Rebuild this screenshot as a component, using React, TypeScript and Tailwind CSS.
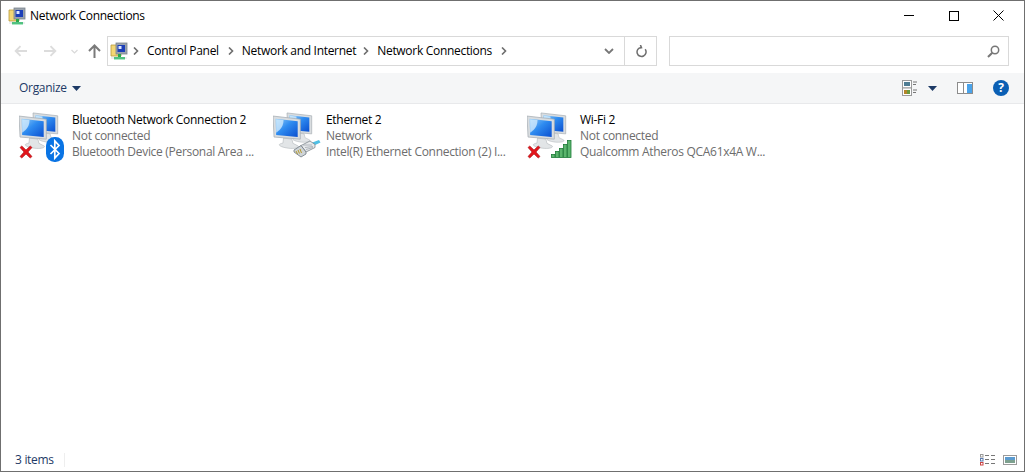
import React from "react";

// --- Data ---

type Connection = {
  name: string;
  status: string;
  device: string;
  badge: "bluetooth" | "ethernet" | "wifi";
};

const CONNECTIONS: Connection[] = [
  { name: "Bluetooth Network Connection 2", status: "Not connected", device: "Bluetooth Device (Personal Area ...", badge: "bluetooth" },
  { name: "Ethernet 2", status: "Network", device: "Intel(R) Ethernet Connection (2) I...", badge: "ethernet" },
  { name: "Wi-Fi 2", status: "Not connected", device: "Qualcomm Atheros QCA61x4A W...", badge: "wifi" },
];

// --- Icons ---

const FolderNetIcon = () => (
  <svg width="18" height="18" viewBox="0 0 18 18" className="shrink-0">
    <path d="M1 3h5l1 1h4v10H1z" fill="#f3d774" stroke="#b89a3e" strokeWidth="0.8" />
    <rect x="6" y="1" width="11" height="11" fill="#9aa3ad" stroke="#7b838c" strokeWidth="0.8" />
    <rect x="7.5" y="3" width="7.5" height="7" fill="#1c3fb8" />
    <rect x="8.5" y="4" width="3" height="3" fill="#dbe6fb" />
    <rect x="8" y="12" width="3" height="3" fill="#2aa84a" />
    <rect x="4" y="15" width="11" height="2.4" fill="#2fc26a" />
    <rect x="1" y="15.5" width="16" height="1" fill="#b9bfc4" opacity="0.5" />
  </svg>
);

const Monitor = ({ x, y, s = 1 }: { x: number; y: number; s?: number }) => (
  <g transform={`translate(${x} ${y}) scale(${s})`}>
    <path d="M10 22l8 1 1 4 5 2.500c1 1.500-2 2.500-7 2.300-5-.2-11-1.800-11-3.500 0-.7 2-1.300 3.500-1.500z" fill="#e2e5e7" stroke="#b5babe" strokeWidth="0.6" />
    <path d="M0 1l26 3v19L1 21z" fill="#d9dde0" stroke="#a5acb2" strokeWidth="0.7" />
    <path d="M2.500 3.500l21 2.400v15L3 19z" fill="url(#screenFill)" />
    <path d="M3 4l7 .8c0 5-2 9-7 12z" fill="#d8effd" opacity="0.75" />
  </g>
);

const RedCross = () => (
  <svg width="16" height="16" viewBox="0 0 16 16" className="absolute left-[0px] top-[33px]">
    <path d="M2 3.500L3.800 2l4.200 4 4.200-4L14 3.500 10 8l4 4.500-1.800 1.500L8 10l-4.200 4L2 12.500 6 8z" fill="#e2161c" stroke="#a81419" strokeWidth="0.6" />
  </svg>
);

const BluetoothBadge = () => (
  <svg width="18" height="25" viewBox="0 0 18 25" className="absolute left-[28px] top-[26px]">
    <rect x="0" y="0" width="18" height="25" rx="8.500" fill="#0a74e4" />
    <path d="M4.500 8l8.500 8.500-4.200 4.500V4l4.200 4.500L4.500 17" fill="none" stroke="#fff" strokeWidth="1.700" />
  </svg>
);

const EthernetBadge = () => (
  <svg width="28" height="18" viewBox="0 0 28 18" className="absolute left-[21px] top-[29px]">
    <path d="M18 3l8-3 1.500 2.500-7.500 3.500z" fill="#4fbfe4" />
    <path d="M8 5.500L17 1l5 3.500v3L13 12z" fill="#e6e9eb" stroke="#7c858d" strokeWidth="0.8" />
    <path d="M1 10l7-4.500 5 6.500v2l-5 3-7-5z" fill="#cfd4d7" stroke="#6f7881" strokeWidth="0.8" />
    <path d="M10 5l9 0M12 7.500l8-1M13 9.500l7-2" stroke="#9aa1a7" strokeWidth="0.7" />
    <path d="M3 11l1.500 3M5 10l1.500 3.500M7 9l1.500 4" stroke="#b59a2c" strokeWidth="1" />
  </svg>
);

const WifiBadge = () => (
  <svg width="22" height="18" viewBox="0 0 22 18" className="absolute left-[25px] top-[29px]">
    {[
      [0, 14, 3],
      [4, 11, 6],
      [8, 8, 9],
      [12, 4, 13],
      [16, 0, 17],
    ].map(([x, y, h]) => (
      <rect key={x} x={x + 0.5} y={y + 0.5} width="3.500" height={h} fill="#5bb56d" stroke="#1d7a37" strokeWidth="0.8" />
    ))}
  </svg>
);

const ConnectionIcon = ({ badge }: { badge: Connection["badge"] }) => (
  <div className="relative h-[50px] w-[48px] shrink-0">
    <svg width="44" height="42" viewBox="0 0 44 42" className="absolute left-[1px] top-0">
      <defs>
        <linearGradient id="screenFill" x1="0" y1="0" x2="1" y2="1">
          <stop offset="0" stopColor="#8fcbf8" />
          <stop offset="0.45" stopColor="#2f8cf0" />
          <stop offset="1" stopColor="#0a4fd0" />
        </linearGradient>
      </defs>
      <Monitor x={14} y={1} s={0.95} />
      <Monitor x={0} y={4} s={1.05} />
    </svg>
    {badge !== "ethernet" && <RedCross />}
    {badge === "bluetooth" && <BluetoothBadge />}
    {badge === "ethernet" && <EthernetBadge />}
    {badge === "wifi" && <WifiBadge />}
  </div>
);

const Chevron = () => (
  <svg width="6" height="8" viewBox="0 0 6 8" className="shrink-0">
    <path d="M1 .5L4.500 4 1 7.500" fill="none" stroke="#6e6e6e" strokeWidth="1.600" />
  </svg>
);

const Caret = () => (
  <svg width="9" height="5" viewBox="0 0 9 5" className="shrink-0">
    <path d="M0 0h9L4.500 5z" fill="#1d3a66" />
  </svg>
);

// --- Component ---

export default function App() {
  return (
    <div className="flex h-[472px] w-[1025px] flex-col overflow-hidden border border-[#6f6f6f] bg-white font-['Open_Sans','Noto_Sans',sans-serif] text-[12px] tracking-[-0.3px] text-black">
      {/* Title bar */}
      <div className="flex h-[30px] shrink-0 items-center pl-[7px]">
        <FolderNetIcon />
        <span className="ml-[4px]">Network Connections</span>
        <div className="ml-auto flex items-center pb-[1px] pr-[3px]">
          <div className="flex h-[30px] w-[45px] items-center justify-center">
            <div className="h-px w-[10px] bg-black" />
          </div>
          <div className="flex h-[30px] w-[45px] items-center justify-center">
            <div className="h-[10px] w-[10px] border border-black" />
          </div>
          <div className="flex h-[30px] w-[45px] items-center justify-center">
            <svg width="11" height="11" viewBox="0 0 11 11">
              <path d="M.5.500l10 10M10.500.500l-10 10" stroke="#000" strokeWidth="1" />
            </svg>
          </div>
        </div>
      </div>

      {/* Navigation row */}
      <div className="mt-[5px] flex h-[30px] shrink-0 items-center">
        <div className="flex w-[106px] shrink-0 items-center pl-[13px]">
          <svg width="13" height="12" viewBox="0 0 13 12">
            <path d="M13 6H2M6.500 1.200L1.700 6l4.800 4.800" fill="none" stroke="#dcdcdc" strokeWidth="1.900" />
          </svg>
          <svg width="13" height="12" viewBox="0 0 13 12" className="ml-[17px]">
            <path d="M0 6h11M6.500 1.200L11.300 6l-4.800 4.800" fill="none" stroke="#dcdcdc" strokeWidth="1.900" />
          </svg>
          <svg width="7" height="5" viewBox="0 0 7 5" className="ml-[14px]">
            <path d="M.5 1l3 3 3-3" fill="none" stroke="#d9d9d9" strokeWidth="1.200" />
          </svg>
          <svg width="13" height="14" viewBox="0 0 13 14" className="ml-[10px]">
            <path d="M6.500 14V2M1 7l5.500-5.500L12 7" fill="none" stroke="#7a7a7a" strokeWidth="2" />
          </svg>
        </div>
        <div className="flex h-[30px] w-[550px] shrink-0 items-center border border-[#d9d9d9] pl-[2px]">
          <FolderNetIcon />
          <div className="ml-[5px]"><Chevron /></div>
          <span className="ml-[8px]">Control Panel</span>
          <div className="ml-[9px]"><Chevron /></div>
          <span className="ml-[8px]">Network and Internet</span>
          <div className="ml-[7px]"><Chevron /></div>
          <span className="ml-[8px]">Network Connections</span>
          <div className="ml-[9px]"><Chevron /></div>
          <div className="ml-auto flex h-full items-center">
            <svg width="10" height="6" viewBox="0 0 10 6" className="mr-[10px]">
              <path d="M1 1l4 4 4-4" fill="none" stroke="#777" strokeWidth="1.800" />
            </svg>
            <div className="flex h-full w-[32px] items-center justify-center border-l border-[#d9d9d9]">
              <svg width="12" height="13" viewBox="0 0 12 13">
                <path d="M4.500 2.700a4.500 4.500 0 1 0 4.500.300M3 .5l2 2.300-2.500 1.400" fill="none" stroke="#6e6e6e" strokeWidth="1.500" transform="rotate(20 6 7)" />
              </svg>
            </div>
          </div>
        </div>
        <div className="ml-[12px] flex h-[30px] w-[340px] shrink-0 items-center justify-end border border-[#d9d9d9] pr-[8px]">
          <svg width="13" height="13" viewBox="0 0 13 13">
            <circle cx="8" cy="5" r="3.700" fill="none" stroke="#777" strokeWidth="1.500" />
            <path d="M5.300 7.700L1 12" stroke="#777" strokeWidth="2" />
          </svg>
        </div>
      </div>

      {/* Command bar */}
      <div className="mt-[7px] flex h-[31px] shrink-0 items-center border-b border-[#e8e9eb] bg-[#f5f6f7] pl-[18px]">
        <span className="text-[#1d3a66]">Organize</span>
        <div className="ml-[5px]"><Caret /></div>
        <div className="ml-auto flex items-center pr-[15px]">
          <svg width="16" height="16" viewBox="0 0 16 16">
            <rect x=".5" y=".5" width="9" height="7.500" fill="#fff" stroke="#9a9a9a" />
            <rect x="2" y="2" width="6" height="4" fill="#4f7d93" />
            <rect x=".5" y="8" width="9" height="7.500" fill="#fff" stroke="#9a9a9a" />
            <rect x="2" y="10" width="3" height="4" fill="#b5842a" />
            <rect x="5" y="10" width="3" height="4" fill="#6a9a3e" />
            <path d="M11 2h4M11 4.500h3M11 10h4M11 12.500h3" stroke="#777" strokeWidth="1" />
          </svg>
          <div className="ml-[10px]"><Caret /></div>
          <svg width="16" height="12" viewBox="0 0 16 12" className="ml-[20px]">
            <rect x=".5" y=".5" width="15" height="11" fill="#fff" stroke="#8c8c8c" />
            <rect x="1" y="1" width="5" height="10" fill="#fff" />
            <rect x="6" y="1" width="1" height="10" fill="#8c8c8c" />
            <rect x="10" y="2" width="5" height="9" fill="#4aa3ea" />
          </svg>
          <div className="ml-[20px] flex h-[16px] w-[16px] items-center justify-center rounded-full bg-[#0a5fb4] text-[12px] font-bold leading-none text-white">
            ?
          </div>
        </div>
      </div>

      {/* Connection tiles */}
      <div className="flex min-h-0 flex-1 items-start pl-[17px] pt-[7px]">
        {CONNECTIONS.map((c) => (
          <div key={c.name} className="flex w-[254px] shrink-0 items-start">
            <ConnectionIcon badge={c.badge} />
            <div className="ml-[6px] mt-[1px] flex flex-col whitespace-nowrap leading-[16px]">
              <span>{c.name}</span>
              <span className="text-[#6d6d6d]">{c.status}</span>
              <span className="text-[#6d6d6d]">{c.device}</span>
            </div>
          </div>
        ))}
      </div>

      {/* Status bar */}
      <div className="flex h-[22px] shrink-0 items-center pl-[14px] pr-[7px]">
        <span className="text-[#1d3a66]">3 items</span>
        <div className="ml-[10px] h-[14px] w-px bg-[#eeeeee]" />
        <div className="ml-auto flex items-center gap-[7px]">
          <svg width="16" height="12" viewBox="0 0 16 12">
            <rect x=".5" y=".5" width="2.500" height="2.500" fill="#fff" stroke="#9a9a9a" />
            <rect x=".5" y="4.500" width="2.500" height="2.500" fill="#fff" stroke="#5a7bb0" />
            <rect x=".5" y="8.500" width="2.500" height="2.500" fill="#fff" stroke="#c44" />
            <path d="M5 1.500h4M11 1.500h4M5 5.500h4M11 5.500h4M5 9.500h4M11 9.500h4" stroke="#777" strokeWidth="1" />
          </svg>
          <svg width="14" height="10" viewBox="0 0 14 10">
            <rect x=".5" y=".5" width="13" height="9" fill="#fff" stroke="#9a9a9a" />
            <rect x="2" y="2" width="10" height="3" fill="#5b9bd0" />
            <rect x="2" y="5" width="10" height="3" fill="#7da08f" />
          </svg>
        </div>
      </div>
    </div>
  );
}
